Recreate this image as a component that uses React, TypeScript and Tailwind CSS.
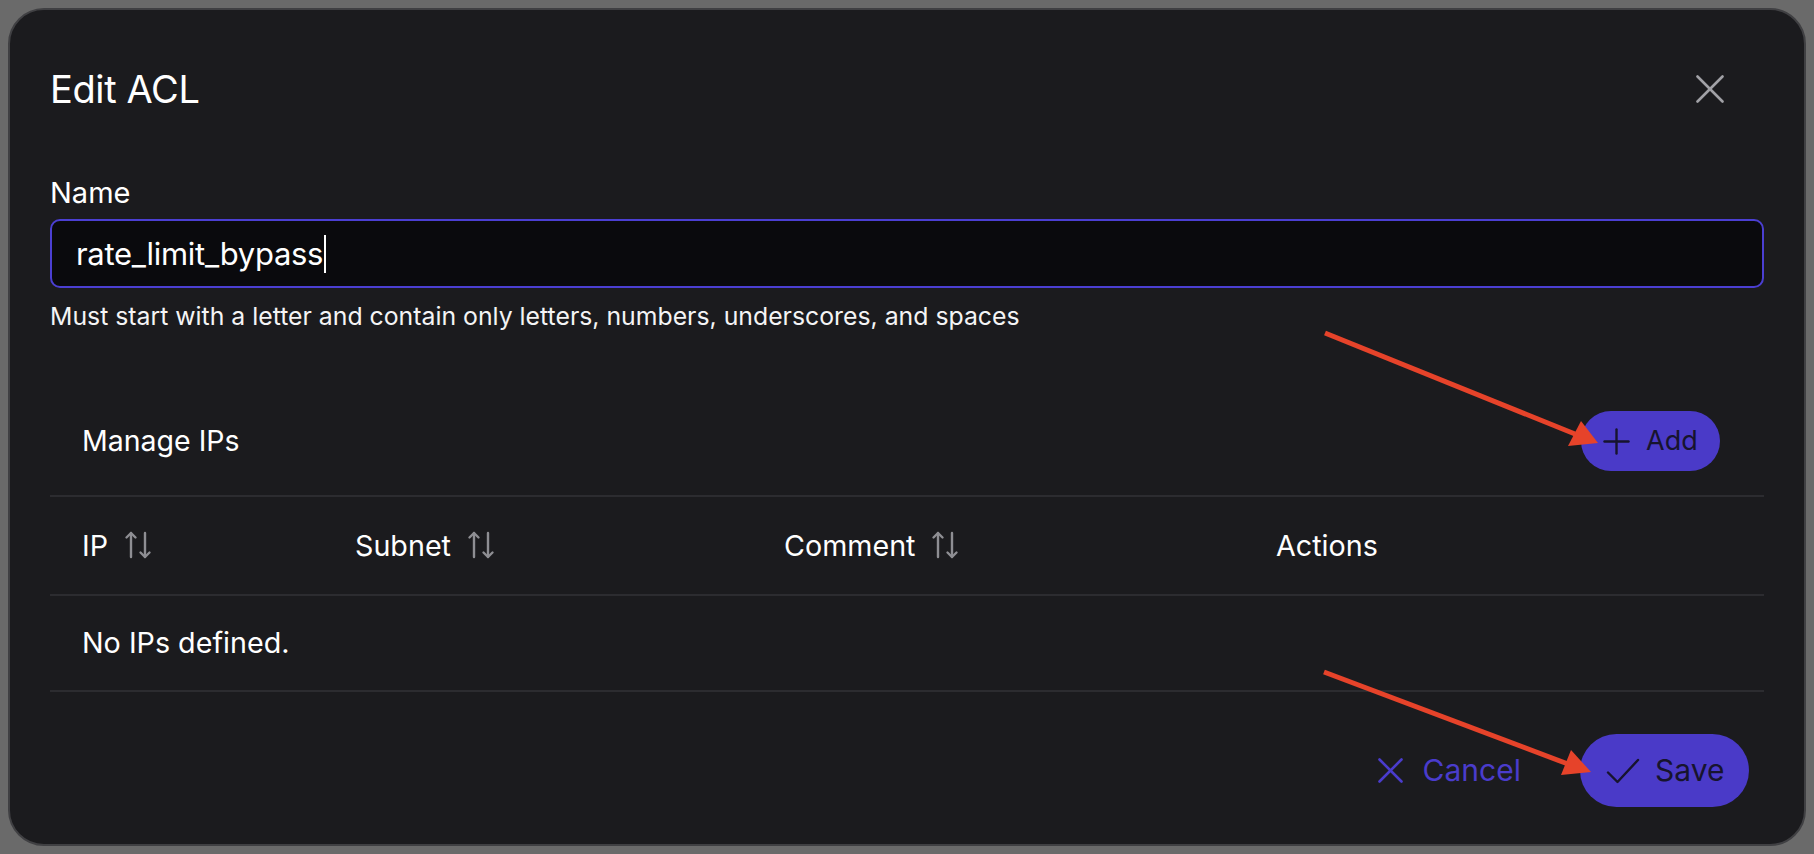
function SortIcon() {
  return (
    <svg width="28" height="30" viewBox="0 0 28 30" fill="none" stroke="#8e8e93" strokeWidth="2.4" strokeLinecap="round" strokeLinejoin="round">
      <path d="M7 27V3" />
      <path d="M2.5 7.5 7 3l4.5 4.5" />
      <path d="M21 3v24" />
      <path d="M16.5 22.5 21 27l4.5-4.5" />
    </svg>
  );
}

function CrossIcon({ size, stroke = 2.4 }: { size: number; stroke?: number }) {
  return (
    <svg width={size} height={size} viewBox={`0 0 ${size} ${size}`} fill="none" stroke="currentColor" strokeWidth={stroke} strokeLinecap="round">
      <path d={`M1.5 1.5 ${size - 1.5} ${size - 1.5}`} />
      <path d={`M${size - 1.5} 1.5 1.5 ${size - 1.5}`} />
    </svg>
  );
}

function PlusIcon() {
  return (
    <svg width="27" height="27" viewBox="0 0 27 27" fill="none" stroke="currentColor" strokeWidth="2.4" strokeLinecap="round">
      <path d="M13.5 1.5v24" />
      <path d="M1.5 13.5h24" />
    </svg>
  );
}

function CheckIcon() {
  return (
    <svg width="34" height="26" viewBox="0 0 34 26" fill="none" stroke="currentColor" strokeWidth="2.4" strokeLinecap="round" strokeLinejoin="round">
      <path d="M2 14.5 11.5 24 32 2" />
    </svg>
  );
}

function Annotations() {
  return (
    <svg className="pointer-events-none absolute inset-0" width="1814" height="854" viewBox="0 0 1814 854">
      <g stroke="#e6432a" strokeWidth="5" strokeLinecap="butt">
        <line x1="1325" y1="333" x2="1575" y2="434" />
        <line x1="1324" y1="672" x2="1568" y2="764" />
      </g>
      <g fill="#e6432a">
        <polygon points="1598,443 1568,446 1581,421" />
        <polygon points="1591,772 1561,775 1571,750" />
      </g>
    </svg>
  );
}

const HEADERS = [
  { label: "IP", sortable: true },
  { label: "Subnet", sortable: true },
  { label: "Comment", sortable: true },
  { label: "Actions", sortable: false },
];

export default function App() {
  return (
    <div
      className="relative h-[854px] w-[1814px] overflow-hidden bg-[#6a6a6a] pl-[8px] pt-[8px] text-white"
      style={{ fontFamily: "Inter, 'Liberation Sans', sans-serif" }}
    >
      <div className="flex h-[838px] w-[1798px] flex-col rounded-[36px] border-2 border-[#404043] bg-[#1b1b1e] px-[40px] pt-[47px]">
        {/* header */}
        <div className="flex h-[64px] items-center justify-between">
          <h1 className="text-[38px] font-normal leading-none tracking-[-0.01em]">Edit ACL</h1>
          <button className="mr-[30px] flex h-[48px] w-[48px] items-center justify-center text-[#a1a1a6]">
            <CrossIcon size={28} stroke={2.6} />
          </button>
        </div>

        {/* name field */}
        <label className="mt-[54px] block text-[29px] leading-[36px]">Name</label>
        <div className="mt-[8px] flex h-[69px] items-center rounded-[10px] border-2 border-[#4b3fd2] bg-[#0a0a0d] pl-[24px]">
          <span className="text-[31px] leading-none tracking-[-0.01em]">rate_limit_bypass</span>
          <span className="ml-[1px] h-[38px] w-[2px] bg-white" />
        </div>
        <p className="mt-[12px] text-[24.8px] leading-[32px] text-[#f4f4f5]">
          Must start with a letter and contain only letters, numbers, underscores, and spaces
        </p>

        {/* manage ips */}
        <div className="mt-[79px] flex h-[60px] items-center justify-between pl-[32px] pr-[44px]">
          <span className="text-[28.5px]">Manage IPs</span>
          <button className="flex h-[60px] w-[139px] items-center gap-[16px] rounded-full bg-[#4a3ac8] pl-[22px] text-[27px] text-[#17142e]">
            <PlusIcon />
            <span>Add</span>
          </button>
        </div>

        {/* table */}
        <div className="mt-[24px] border-t-2 border-[#2c2c30]">
          <div className="grid h-[99px] grid-cols-[273px_429px_492px_1fr] items-center border-b-2 border-[#2c2c30]">
            {HEADERS.map((h) => (
              <div key={h.label} className="flex items-center gap-[16px] pl-[32px] text-[28.7px]">
                <span>{h.label}</span>
                {h.sortable && <SortIcon />}
              </div>
            ))}
          </div>
          <div className="flex h-[96px] items-center border-b-2 border-[#2c2c30] pl-[32px] text-[28.7px]">
            No IPs defined.
          </div>
        </div>

        {/* footer */}
        <div className="mt-[42px] flex items-center justify-end pr-[15px]">
          <button className="mr-[59px] flex items-center gap-[20px] text-[30px] text-[#4a3ccc]">
            <CrossIcon size={25} stroke={2.6} />
            <span>Cancel</span>
          </button>
          <button className="flex h-[73px] w-[169px] items-center gap-[15px] rounded-full bg-[#4a3ac8] pl-[26px] text-[30px] text-[#17142e]">
            <CheckIcon />
            <span>Save</span>
          </button>
        </div>
      </div>
      <Annotations />
    </div>
  );
}
